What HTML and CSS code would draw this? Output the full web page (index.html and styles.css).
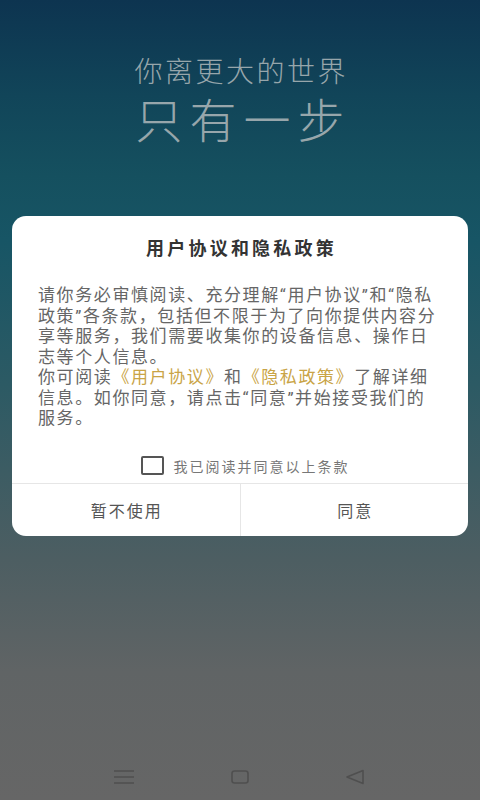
FILE: index.html
```html
<!DOCTYPE html>
<html lang="zh-CN">
<head>
<meta charset="utf-8">
<title>用户协议和隐私政策</title>
<link rel="stylesheet" href="styles.css">
</head>
<body>
<div class="screen">
  <div class="hero">
    <div class="hero-line1">你离更大的世界</div>
    <div class="hero-line2">只有一步</div>
  </div>

  <div class="dialog">
    <div class="dialog-title">用户协议和隐私政策</div>
    <div class="dialog-body">
      <span class="ln">请你务必审慎阅读、充分理解“用户协议”和“隐私</span>
      <span class="ln">政策”各条款，包括但不限于为了向你提供内容分</span>
      <span class="ln">享等服务，我们需要收集你的设备信息、操作日</span>
      <span class="ln">志等个人信息。</span>
      <span class="ln">你可阅读<span class="link">《用户协议》</span>和<span class="link">《隐私政策》</span>了解详细</span>
      <span class="ln">信息。如你同意，请点击“同意”并始接受我们的</span>
      <span class="ln">服务。</span>
    </div>
    <div class="agree-row">
      <span class="checkbox"></span>
      <span class="agree-text">我已阅读并同意以上条款</span>
    </div>
    <div class="buttons">
      <div class="btn btn-left">暂不使用</div>
      <div class="btn">同意</div>
    </div>
  </div>

  <div class="navbar">
    <svg class="nav-icon" width="22" height="16" viewBox="0 0 22 16">
      <path d="M1 2h20M1 8h20M1 14h20" stroke="#4f4f4f" stroke-width="1.6" fill="none"/>
    </svg>
    <svg class="nav-icon" width="18" height="14" viewBox="0 0 18 14">
      <rect x="1" y="1" width="16" height="12" rx="2.5" stroke="#4f4f4f" stroke-width="1.6" fill="none"/>
    </svg>
    <svg class="nav-icon" width="20" height="16" viewBox="0 0 20 16">
      <path d="M18 1.5L2 8l16 6.5z" stroke="#4f4f4f" stroke-width="1.6" stroke-linejoin="round" fill="none"/>
    </svg>
  </div>
</div>
</body>
</html>
```

FILE: styles.css
```css
html, body {
  margin: 0;
  padding: 0;
}

body {
  font-family: "Noto Sans CJK SC", "Noto Sans", sans-serif;
}

.screen {
  width: 480px;
  height: 800px;
  display: flex;
  flex-direction: column;
  align-items: center;
  background: linear-gradient(to bottom,
    #0d3450 0%,
    #114559 12%,
    #15505f 22%,
    #175565 30%,
    #2c5a64 48%,
    #4d5e62 70%,
    #606465 84%,
    #666666 100%);
  overflow: hidden;
}

.hero {
  padding-top: 52px;
  text-align: center;
  color: #97a6ab;
}

.hero-line1 {
  font-size: 28px;
  line-height: 36px;
  font-weight: 200;
  letter-spacing: 2.5px;
  margin-right: -2.5px;
}

.hero-line2 {
  margin-top: 2px;
  font-size: 47px;
  line-height: 56px;
  font-weight: 200;
  letter-spacing: 7px;
  margin-right: -7px;
}

.dialog {
  margin-top: 70px;
  width: 456px;
  background: #ffffff;
  border-radius: 14px;
  display: flex;
  flex-direction: column;
  overflow: hidden;
}

.dialog-title {
  padding-top: 18px;
  font-size: 18px;
  line-height: 26px;
  font-weight: 700;
  color: #333333;
  text-align: center;
  letter-spacing: 3.2px;
  padding-left: 3px;
}

.dialog-body {
  margin-top: 25px;
  padding: 0 20px 0 26px;
  font-family: "Roboto", "Noto Sans CJK SC", sans-serif;
  font-size: 17px;
  line-height: 20.5px;
  letter-spacing: 1.6px;
  color: #666666;
}

.ln {
  display: block;
  white-space: nowrap;
}

.link {
  color: #c9a446;
}

.agree-row {
  margin-top: 20px;
  height: 34px;
  display: flex;
  align-items: center;
  justify-content: center;
  gap: 10px;
  border-bottom: 1px solid #e6e6e6;
  padding-left: 10px;
}

.checkbox {
  width: 19px;
  height: 15px;
  border: 2px solid #555555;
  border-radius: 2px;
}

.agree-text {
  font-size: 14px;
  line-height: 20px;
  letter-spacing: 2px;
  color: #777777;
}

.buttons {
  display: flex;
  height: 52px;
}

.btn {
  flex: 1;
  display: flex;
  align-items: center;
  justify-content: center;
  font-size: 16px;
  letter-spacing: 2px;
  color: #555555;
  padding-left: 2px;
}

.btn-left {
  border-right: 1px solid #e6e6e6;
}

.navbar {
  margin-top: auto;
  width: 480px;
  height: 46px;
  display: flex;
  align-items: center;
  justify-content: space-between;
  padding: 0 115px 0 113px;
  box-sizing: border-box;
}

.nav-icon {
  display: block;
}
```
